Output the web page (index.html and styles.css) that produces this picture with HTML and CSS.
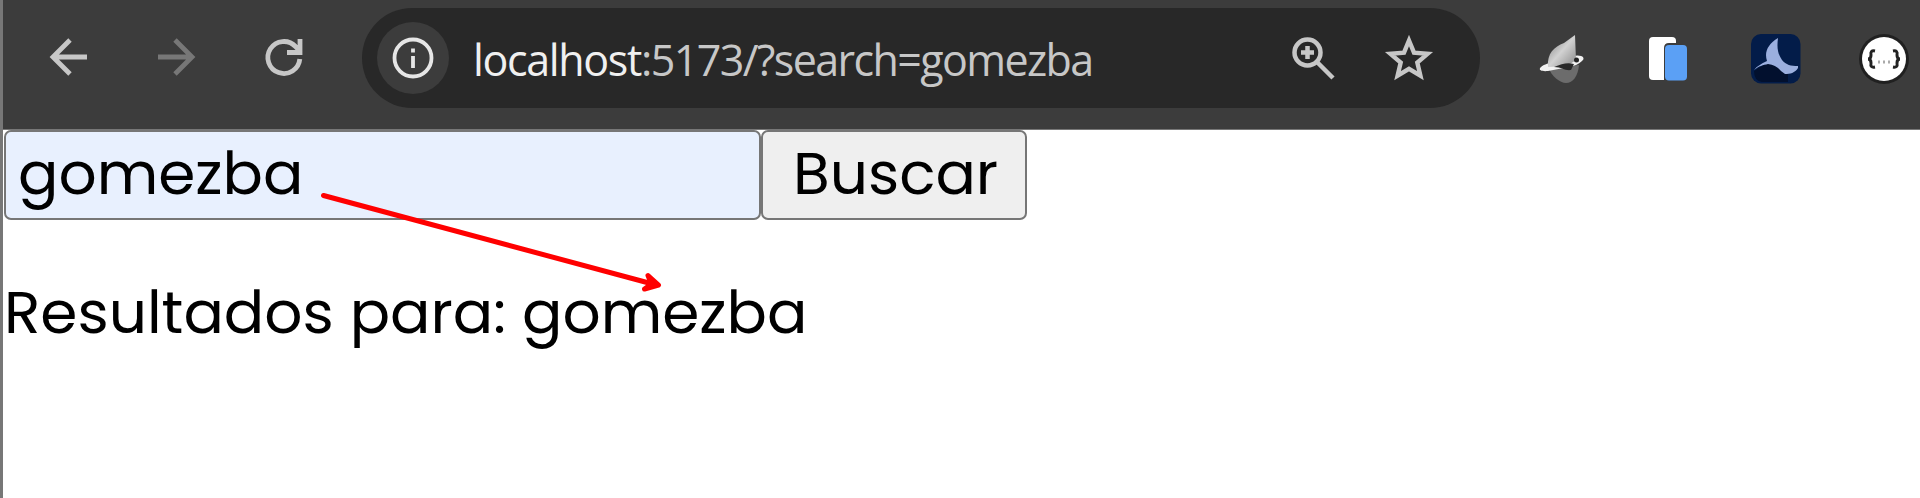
FILE: index.html
```html
<!DOCTYPE html>
<html lang="es">
<head>
<meta charset="utf-8">
<title>Buscar</title>
<link rel="stylesheet" href="styles.css">
</head>
<body>
<div class="window">
  <header class="toolbar">
    <nav class="nav">
      <svg class="icon" viewBox="0 0 44 44"><path d="M40 22H7M23 5 6 22l17 17"/></svg>
      <svg class="icon icon-off" viewBox="0 0 44 44"><path d="M3 22h33M20 5l17 17-17 17"/></svg>
      <svg class="icon" viewBox="0 0 44 44"><path d="M36.800 24A16 16 0 1 1 32.500 11.500L37 16M37 4v13.500H24"/></svg>
    </nav>
    <div class="address">
      <span class="info">
        <svg class="icon" viewBox="0 0 44 44"><circle cx="22" cy="22" r="18.500"/><path d="M22 20v12M22 12.500v4"/></svg>
      </span>
      <span class="url"><span class="host">localhost</span>:5173/?search=gomezba</span>
      <svg class="icon zoom" viewBox="0 0 44 44"><circle cx="16.500" cy="16.500" r="13"/><path d="M26 26l16 16M16.500 10v13M10 16.500h13"/></svg>
      <svg class="icon-star" viewBox="0 0 50 50"><path d="M25 7.500l5 12.200 13.600 1.100-10.300 8.800 3.100 13L25 35.800l-11.400 6.800 3.100-13-10.300-8.800 13.600-1.100z"/></svg>
    </div>
    <div class="extensions">
      <svg class="ext" viewBox="0 0 52 52">
        <defs><linearGradient id="fin" x1="0" y1="0" x2="1" y2="1"><stop offset="0" stop-color="#777"/><stop offset=".5" stop-color="#d2d2d2"/><stop offset="1" stop-color="#888"/></linearGradient></defs>
        <path d="M15 35c2 8 11 15 17 15 7 0 12-7 13-18z" fill="#6c6c6c"/>
        <path d="M39 23c9-2 13 2 9 5-3 3-7 5-13 6L14 38C3 39 3 34 15 30z" fill="#f2f2f2"/>
        <path d="M14 34c-1-14 6-20 16-24l11-8 1 25-9 6z" fill="url(#fin)"/>
        <path d="M20 34c8-3 13-5 20-3l-3 6c-6 1-9-3-17-3z" fill="#292929"/>
        <circle cx="42.500" cy="27" r="2.500" fill="#222"/>
      </svg>
      <svg class="ext" viewBox="0 0 52 52"><rect x="7" y="4" width="27" height="43" rx="4" fill="#fff"/><path d="M22 47V15q0-5 5-5h7v37z" fill="#3c3c3c"/><rect x="23" y="12" width="22" height="35.500" rx="4" fill="#5ba0f5"/></svg>
      <svg class="ext" viewBox="0 0 52 52"><rect x="1" y="1" width="49.500" height="49.500" rx="10" fill="#031c49"/><path d="M4 38l14-9 20 11v9H12Q4 48 4 38z" fill="#02102e"/><path d="M28 5c-10 6-14 14-11 23-6 3-10 5-13 9 5-4 9-5 14-6 6 1 10 3 13 7l4 3c5 0 10-1 13-6v-2c-7 0-12-1-16-6-5-7-5-14-4-22z" fill="#9bafdf"/></svg>
      <svg class="ext" viewBox="0 0 52 52"><circle cx="26" cy="26" r="25" fill="#202020"/><circle cx="26" cy="26" r="22" fill="#fff"/><path d="M17 18q-5-1-4 4 0 4-3 4 3 0 3 4-1 5 4 4M35 18q5-1 4 4 0 4 3 4-3 0-3 4 1 5-4 4" fill="none" stroke="#222" stroke-width="3"/><path d="M20 29h2M25 29h2M30 29h2" stroke="#aaa" stroke-width="3"/></svg>
    </div>
  </header>
  <main class="page">
    <form class="search">
      <div class="field"><span class="field-text">gomezba</span></div>
      <div class="submit"><span class="submit-text">Buscar</span></div>
    </form>
    <p class="results">Resultados para: gomezba</p>
    <svg class="arrow" viewBox="0 0 350 110"><path d="M5.500 6.500l331 89M330 86.500l10.500 9.500-14 4 7-5z"/></svg>
  </main>
</div>
</body>
</html>
```
FILE: styles.css
```css
* { box-sizing: border-box; }
body { margin: 0; background: #fff; overflow: hidden; }
.window { height: 498px; border-left: 3px solid #777; }
.toolbar {
  height: 130px;
  padding-top: 8px;
  display: flex;
  align-items: flex-start;
  background: #3c3c3c;
  border-bottom: 1px solid #777;
}
.icon { width: 44px; height: 44px; flex: none; fill: none; stroke: #c7c7c7; stroke-width: 4.8; }
.icon-off { stroke: #777; }
.nav { width: 359px; padding: 27px 0 0 44px; display: flex; gap: 64px; flex: none; }
.address {
  width: 1118px;
  height: 100px;
  padding: 0 46px 0 15px;
  display: flex;
  align-items: center;
  flex: none;
  background: #282828;
  border-radius: 50px;
}
.info {
  width: 72px;
  height: 72px;
  display: flex;
  align-items: center;
  justify-content: center;
  flex: none;
  border-radius: 50%;
  background: #3c3c3c;
}
.info .icon { stroke: #e6e6e6; stroke-width: 3.8; }
.url {
  margin: 0 auto 0 24px;
  padding-top: 3px;
  font: 43px/60px "Open Sans", sans-serif;
  letter-spacing: -1.6px;
  color: #c7c7c7;
  white-space: nowrap;
}
.host { color: #f0f0f0; letter-spacing: -1.35px; }
.zoom { margin-right: 49px; stroke-width: 4.5; }
.icon-star { width: 50px; height: 50px; fill: none; stroke: #c7c7c7; stroke-width: 4.4; flex: none; }
.extensions { padding: 25px 0 0 54px; display: flex; gap: 56px; }
.ext { width: 52px; height: 52px; flex: none; }
.page { position: relative; font: 59.8px/83px Poppins, sans-serif; color: #000; }
.search { display: flex; padding-left: 1px; }
.field, .submit { height: 90px; border: 2px solid #767676; border-radius: 7px; white-space: nowrap; }
.field { width: 757px; padding-left: 12px; background: #e8f0fe; }
.submit { width: 266px; padding-left: 30px; background: #efefef; }
.results { margin: 51px 0 0; padding-left: 1px; white-space: nowrap; }
.arrow {
  position: absolute;
  left: 315px;
  top: 59px;
  width: 350px;
  height: 110px;
  fill: #f00;
  stroke: #f00;
  stroke-width: 5;
  stroke-linecap: round;
  stroke-linejoin: round;
}
```
